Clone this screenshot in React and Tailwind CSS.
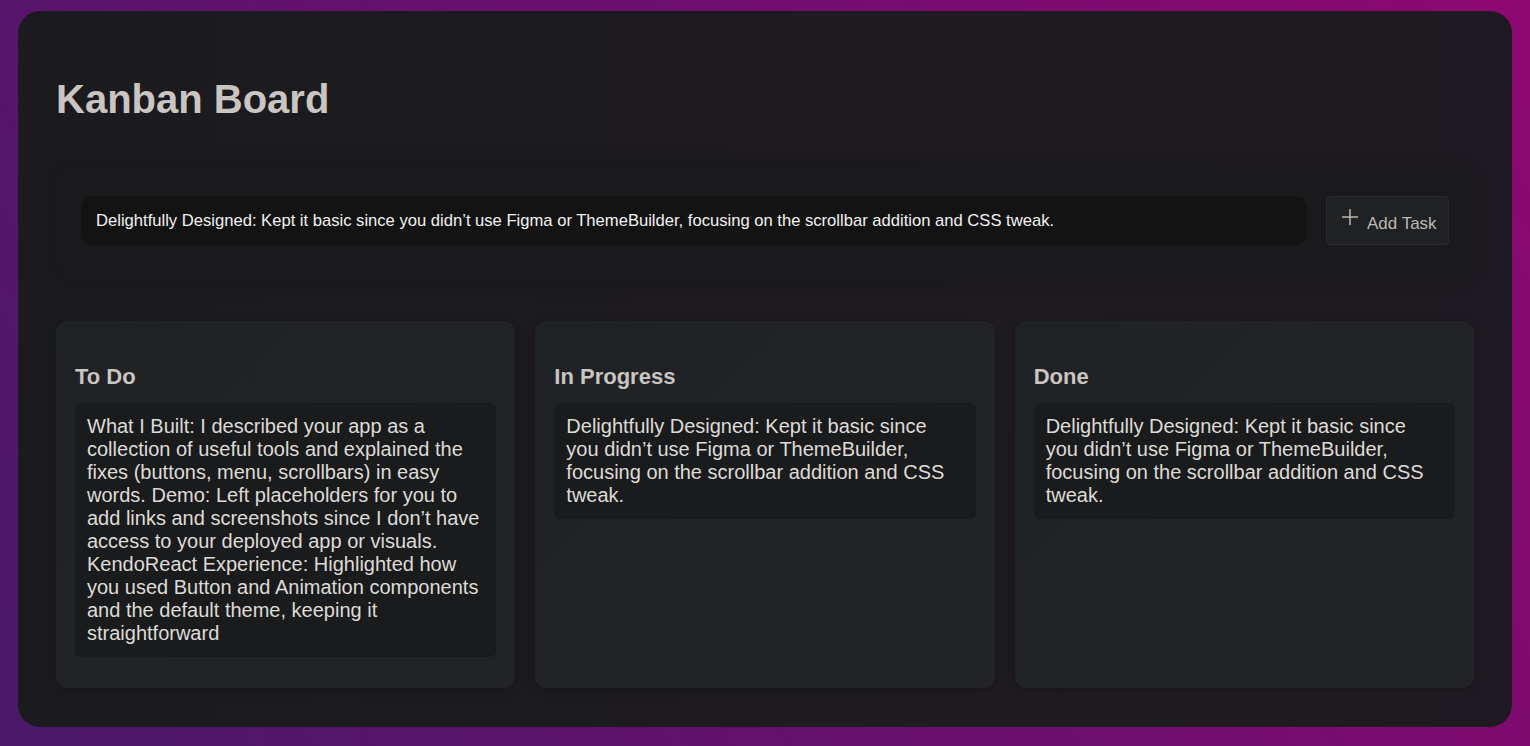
import React, { useState } from "react";

const columns = [
  {
    title: "To Do",
    tasks: [
      "What I Built: I described your app as a collection of useful tools and explained the fixes (buttons, menu, scrollbars) in easy words. Demo: Left placeholders for you to add links and screenshots since I don’t have access to your deployed app or visuals. KendoReact Experience: Highlighted how you used Button and Animation components and the default theme, keeping it straightforward",
    ],
  },
  {
    title: "In Progress",
    tasks: [
      "Delightfully Designed: Kept it basic since you didn’t use Figma or ThemeBuilder, focusing on the scrollbar addition and CSS tweak.",
    ],
  },
  {
    title: "Done",
    tasks: [
      "Delightfully Designed: Kept it basic since you didn’t use Figma or ThemeBuilder, focusing on the scrollbar addition and CSS tweak.",
    ],
  },
];

const App = () => {
  const [task, setTask] = useState(
    "Delightfully Designed: Kept it basic since you didn’t use Figma or ThemeBuilder, focusing on the scrollbar addition and CSS tweak."
  );

  return (
    <div className="min-h-screen px-[18px] pt-[11px] pb-[19px] bg-[linear-gradient(60deg,#4a196a_0%,#6a0f6e_50%,#8e0870_100%)] font-['Liberation_Sans',Arial,sans-serif]">
      {/* Board container */}
      <div className="h-[716px] rounded-[22px] bg-[linear-gradient(90deg,#1b1b1f,#1f1a21)] px-[38px] pt-[65px]">
        <h1 className="text-[40px] leading-[46px] font-bold text-[#c9c5c0]">Kanban Board</h1>

        {/* Add task panel */}
        <div className="mt-[43px] flex items-center gap-[19px] rounded-[18px] bg-[#1a1a1d] px-[25px] pt-[31px] pb-[36px] shadow-[0_0_14px_4px_rgba(0,0,0,0.12)]">
          <input
            type="text"
            value={task}
            onChange={(e) => setTask(e.target.value)}
            className="flex-1 h-[49px] rounded-[12px] bg-[#131313] px-[15px] text-[16.6px] text-[#f2f2f2] outline-none"
          />
          <button className="flex h-[49px] w-[123px] items-start gap-[8px] rounded-[4px] border border-[#2a2b2e] bg-[#1f2123] pl-[14px] pt-[10px] text-[#bdb8b2]">
            <svg width="18" height="18" viewBox="0 0 18 18" className="mt-[1px]">
              <path d="M9 1v16M1 9h16" stroke="#bdb8b2" strokeWidth="1.5" />
            </svg>
            <span className="text-[17px] leading-[20px] mt-[7px]">Add Task</span>
          </button>
        </div>

        {/* Columns */}
        <div className="mt-[40px] grid grid-cols-3 gap-[20px]">
          {columns.map((col) => (
            <div
              key={col.title}
              className="h-[367px] rounded-[12px] bg-[linear-gradient(135deg,#1f2225_0%,#222326_60%)] px-[19px] pt-[43px] shadow-[0_2px_8px_rgba(0,0,0,0.2)]"
            >
              <h2 className="text-[22px] leading-[25px] font-bold text-[#c9c5c0]">{col.title}</h2>
              <div className="mt-[14px] flex flex-col gap-[10px]">
                {col.tasks.map((t, i) => (
                  <div key={i} className="rounded-[6px] bg-[#1a1b1d] px-[12px] py-[12px] text-[20px] leading-[23px] text-[#dedbd6]">
                    {t}
                  </div>
                ))}
              </div>
            </div>
          ))}
        </div>
      </div>
    </div>
  );
};

export default App;
